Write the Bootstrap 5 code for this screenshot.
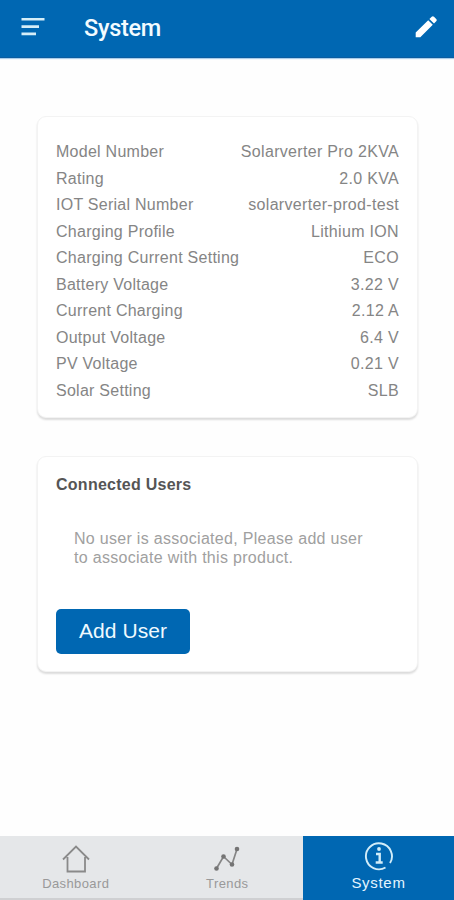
<!DOCTYPE html>
<html lang="en">
<head>
<meta charset="utf-8">
<meta name="viewport" content="width=device-width, initial-scale=1">
<title>System</title>
<link href="https://cdn.jsdelivr.net/npm/bootstrap@5.3.0/dist/css/bootstrap.min.css" rel="stylesheet">
<style>
body { font-family: "Liberation Sans", Arial, sans-serif; font-size: 16px; letter-spacing: .26px; color: #858585; background: #fefefe; height: 900px; overflow: hidden; }
.top-bar { height: 58px; background: #0067b2; border-bottom: 1px solid #0a5ca0; box-shadow: 0 1px 1px #a9cdea; padding: 0 17px 3px 21px; flex-shrink: 0; }
.top-title { font: 500 23.5px/28px Roboto, sans-serif; letter-spacing: -.3px; margin-left: 39px; padding-top: 1px; color: #f2fbff; }
.panel { background: #fff; border: 1px solid #f3f3f3; border-radius: 9px; box-shadow: 0 2px 2px #dcdcdc; padding: 0 18px; }
.info-panel { height: 302px; padding-top: 22px; }
.info-row { height: 26.5px; line-height: 26.5px; }
.info-row span:last-child { letter-spacing: .32px; }
.users-panel { height: 216px; margin-top: 38px; padding-top: 18px; }
.users-title { font-size: 16px; line-height: 20px; color: #555; }
.users-note { margin: 34px 0 0 18px; line-height: 19px; letter-spacing: .3px; color: #a0a0a0; }
.btn-add { width: 134px; height: 45px; margin-top: 42px; padding: 0 0 2px; font-size: 21px; letter-spacing: .05px; color: #effaff; background: #0067b2; border: 0; border-radius: 5px; }
.btn-add:hover { color: #fff; background: #005a9d; }
.tab-bar { height: 64px; background: #e5e7e9; border-bottom: 2px solid #cfd0d2; }
.tab-item { font-size: 13px; line-height: 16px; letter-spacing: .38px; color: #999; text-decoration: none; width: 151.5px; }
.tab-current { height: 64px; width: 151px; font-size: 15px; letter-spacing: .7px; color: #e4f5ff; background: #0067b2; }
main { padding: 58px 36px 0 37px; }
</style>
<script src="https://cdn.jsdelivr.net/npm/bootstrap@5.3.0/dist/js/bootstrap.bundle.min.js"></script>
</head>
<body class="d-flex flex-column">
<header class="top-bar d-flex align-items-center">
  <svg width="24" height="20" viewBox="0 0 24 20" stroke="#d5eef8" stroke-width="2.6"><path d="M.5 2.200H23.500M.5 9.600H18M.5 16.900H15"/></svg>
  <h1 class="top-title mb-0">System</h1>
  <svg class="ms-auto" width="22" height="22" viewBox="0 0 22 22" fill="#fff"><path d="M.7 16.600 13.200 4.200l4.600 4.600L5.300 21.200H.7zM14.400 3 16.700.8c.7-.7 1.600-.7 2.300 0l2.200 2.200c.7.7.7 1.600 0 2.300L19 7.600z"/></svg>
</header>
<main class="flex-grow-1">
  <section class="panel info-panel">
    <div class="info-row d-flex justify-content-between"><span>Model Number</span><span>Solarverter Pro 2KVA</span></div>
    <div class="info-row d-flex justify-content-between"><span>Rating</span><span>2.0 KVA</span></div>
    <div class="info-row d-flex justify-content-between"><span>IOT Serial Number</span><span>solarverter-prod-test</span></div>
    <div class="info-row d-flex justify-content-between"><span>Charging Profile</span><span>Lithium ION</span></div>
    <div class="info-row d-flex justify-content-between"><span>Charging Current Setting</span><span>ECO</span></div>
    <div class="info-row d-flex justify-content-between"><span>Battery Voltage</span><span>3.22 V</span></div>
    <div class="info-row d-flex justify-content-between"><span>Current Charging</span><span>2.12 A</span></div>
    <div class="info-row d-flex justify-content-between"><span>Output Voltage</span><span>6.4 V</span></div>
    <div class="info-row d-flex justify-content-between"><span>PV Voltage</span><span>0.21 V</span></div>
    <div class="info-row d-flex justify-content-between"><span>Solar Setting</span><span>SLB</span></div>
  </section>
  <section class="panel users-panel">
    <h2 class="users-title fw-bold mb-0">Connected Users</h2>
    <p class="users-note">No user is associated, Please add user<br>to associate with this product.</p>
    <button type="button" class="btn btn-add d-block">Add User</button>
  </section>
</main>
<nav class="tab-bar d-flex flex-shrink-0">
  <a href="#" class="tab-item d-flex flex-column align-items-center pt-2">
    <svg width="30" height="32" viewBox="0 0 30 32" fill="none" stroke="#8a8a8a" stroke-width="1.8"><path d="M2 15.500 15 2.500 28 15.500M6.500 13V27.500H24V13"/></svg>
    <span>Dashboard</span>
  </a>
  <a href="#" class="tab-item d-flex flex-column align-items-center pt-2">
    <svg width="28" height="32" viewBox="0 0 28 32" fill="#747474"><path d="M3.500 24.500 10.500 12.500 19 20.500 24 5" fill="none" stroke="#858585" stroke-width="1.700"/><circle cx="3.500" cy="24.500" r="2.300"/><circle cx="10.500" cy="12.500" r="2.300"/><circle cx="19" cy="20.500" r="2.300"/><circle cx="24" cy="5" r="2.300"/></svg>
    <span>Trends</span>
  </a>
  <a href="#" class="tab-item tab-current d-flex flex-column align-items-center">
    <svg width="30" height="39" viewBox="0 0 30 39" fill="none" stroke="#d2edf9" stroke-width="1.900"><path d="M21.500 31.500A13 13 0 1 1 26 27.100"/><path d="M12 18h3.700v8M11.700 26.500h7" stroke-width="2.400"/><circle cx="15" cy="13" r="1.900" fill="#d2edf9" stroke="none"/></svg>
    <span>System</span>
  </a>
</nav>
</body>
</html>
